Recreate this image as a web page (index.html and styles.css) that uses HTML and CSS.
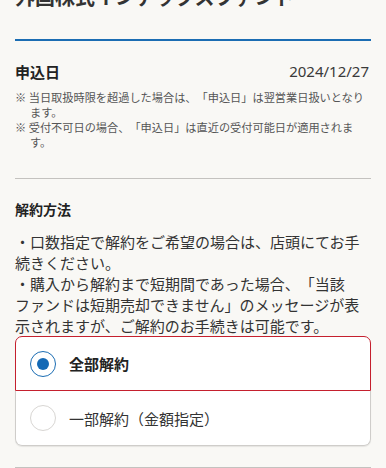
FILE: index.html
```html
<!DOCTYPE html>
<html lang="ja">
<head>
    <meta charset="UTF-8">
    <title>解約申込</title>
    <link rel="stylesheet" href="styles.css">
</head>
<body>
<div class="page">
    <h1 class="fund-title">外国株式インデックスファンド</h1>

    <div class="apply-row">
        <span class="apply-label">申込日</span>
        <span class="apply-date">2024/12/27</span>
    </div>
    <ul class="notes">
        <li>※ 当日取扱時限を超過した場合は、「申込日」は翌営業日扱いとなり<br>ます。</li>
        <li>※ 受付不可日の場合、「申込日」は直近の受付可能日が適用されま<br>す。</li>
    </ul>

    <hr class="divider">

    <h2 class="section-title">解約方法</h2>
    <p class="info">・口数指定で解約をご希望の場合は、店頭にてお手<br>続きください。</p>
    <p class="info">・購入から解約まで短期間であった場合、「当該<br>ファンドは短期売却できません」のメッセージが表<br>示されますが、ご解約のお手続きは可能です。</p>

    <div class="radio-group">
        <label class="radio-option selected">
            <span class="radio-mark"></span>
            <span class="radio-text">全部解約</span>
        </label>
        <label class="radio-option">
            <span class="radio-mark"></span>
            <span class="radio-text">一部解約（金額指定）</span>
        </label>
    </div>

    <hr class="divider bottom">
</div>
</body>
</html>
```

FILE: styles.css
```css
body {
    margin: 0;
    background-color: #f9f8f5;
    color: #333;
    font-family: "Noto Sans CJK JP", "Noto Sans", sans-serif;
    text-spacing-trim: space-all;
}
.page {
    padding: 0 15px;
}
.fund-title {
    margin: -14px 0 0;
    padding-bottom: 31px;
    border-bottom: 2px solid #1b6db3;
    font-size: 20px;
    line-height: 22px;
    font-weight: bold;
    color: #333;
}
.apply-row {
    display: flex;
    justify-content: space-between;
    align-items: center;
    margin-top: 19px;
    height: 22px;
    font-size: 15px;
}
.apply-label {
    font-weight: bold;
    color: #222;
}
.apply-date {
    padding-right: 2px;
    font-family: "Noto Sans", "Noto Sans CJK JP", sans-serif;
    font-size: 15px;
    color: #3a3a3a;
}
.notes {
    list-style: none;
    margin: 8px 0 0;
    padding: 0;
    font-size: 11.2px;
    line-height: 15px;
    color: #555;
}
.notes li {
    padding-left: 15px;
    text-indent: -15px;
    white-space: nowrap;
}
.divider {
    margin: 28px 0 0;
    border: none;
    border-top: 1px solid #c4c2bf;
}
.section-title {
    margin: 20px 0 0;
    font-size: 14px;
    line-height: 20px;
    font-weight: bold;
    color: #222;
}
.info {
    margin: 0;
    font-size: 15px;
    line-height: 21px;
    white-space: nowrap;
}
.info:first-of-type {
    margin-top: 12px;
}
.radio-group {
    margin-top: 0;
    background-color: #fff;
    border-radius: 7px;
    box-shadow: 0 1px 1px rgba(0, 0, 0, 0.08);
}
.radio-option {
    display: flex;
    align-items: center;
    gap: 13px;
    height: 55px;
    box-sizing: border-box;
    padding-left: 14px;
    border: 1px solid #cfcdca;
    font-size: 15px;
}
.radio-option:first-child {
    border-radius: 7px 7px 0 0;
}
.radio-option:last-child {
    border-top: none;
    border-radius: 0 0 7px 7px;
}
.radio-option.selected {
    border: 1px solid #c5202e;
}
.radio-option.selected .radio-text {
    font-weight: bold;
    color: #222;
}
.radio-mark {
    width: 26px;
    height: 26px;
    box-sizing: border-box;
    border: 1.5px solid #d8d6d3;
    border-radius: 50%;
    display: flex;
    align-items: center;
    justify-content: center;
}
.selected .radio-mark {
    border-color: #1b6db3;
}
.selected .radio-mark::after {
    content: "";
    width: 12px;
    height: 12px;
    border-radius: 50%;
    background-color: #1469b5;
}
.divider.bottom {
    margin-top: 21px;
}
```
